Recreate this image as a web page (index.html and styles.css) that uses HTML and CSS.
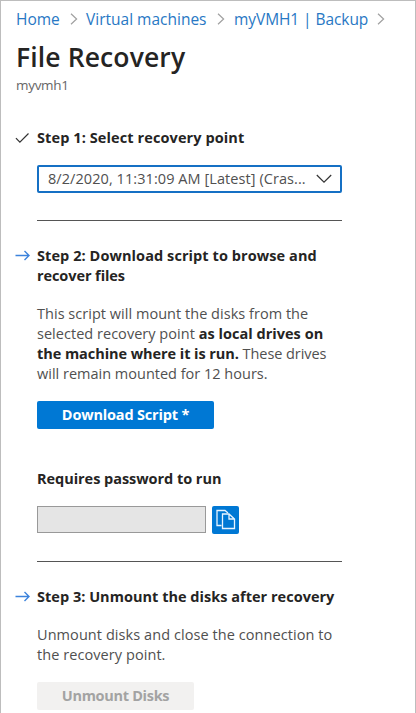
FILE: index.html
```html
<!DOCTYPE html>
<html lang="en">
<head>
<meta charset="utf-8">
<title>File Recovery</title>
<link rel="stylesheet" href="styles.css">
</head>
<body>
<main class="blade">
  <nav class="crumbs">
    <a class="crumb-home">Home</a>
    <svg class="sep" viewBox="0 0 8 12"><path d="M1 .8 6.6 6 1 11.2"/></svg>
    <a class="crumb-vms">Virtual machines</a>
    <svg class="sep" viewBox="0 0 8 12"><path d="M1 .8 6.6 6 1 11.2"/></svg>
    <a class="crumb-backup">myVMH1 | Backup</a>
    <svg class="sep" viewBox="0 0 8 12"><path d="M1 .8 6.6 6 1 11.2"/></svg>
  </nav>
  <h1><span>File Recovery</span></h1>
  <p class="subtitle"><span>myvmh1</span></p>

  <section class="step step-one">
    <svg class="mark check" viewBox="0 0 16 12"><path d="M1 6.2 5.2 10.4 14.4 1.2"/></svg>
    <div class="content">
      <h2><span class="s1">Step 1: Select recovery point</span></h2>
      <div class="select"><span class="value">8/2/2020, 11:31:09 AM [Latest] (Cras...</span>
        <svg class="chevron" viewBox="0 0 16 10"><path d="M.8 1 8 8.2 15.2 1"/></svg>
      </div>
    </div>
  </section>

  <section class="step step-two">
    <svg class="mark arrow" viewBox="0 0 15 12"><path d="M.5 5.500H14M9.500 1 14 5.500 9.500 10"/></svg>
    <div class="content">
      <h2><span class="s2a">Step 2: Download script to browse and</span><br><span class="s2b">recover files</span></h2>
      <p class="text"><span class="t1">This script will mount the disks from the</span><br><span class="t2">selected recovery point <b>as local drives on</b></span><br><span class="t3"><b>the machine where it is run.</b> These drives</span><br><span class="t4">will remain mounted for 12 hours.</span></p>
      <button class="primary"><span>Download Script *</span></button>
      <h3><span>Requires password to run</span></h3>
      <div class="password">
        <div class="field"></div>
        <button class="copy" aria-label="Copy"><svg viewBox="0 0 27 28"><path d="M9.500 19.500H5V4.500H13L16 7"/><path d="M10.500 8H17L22.500 13V22.500H10.500ZM17 8V13H22.500"/></svg></button>
      </div>
    </div>
  </section>

  <section class="step step-three">
    <svg class="mark arrow" viewBox="0 0 15 12"><path d="M.5 5.500H14M9.500 1 14 5.500 9.500 10"/></svg>
    <div class="content">
      <h2><span class="s3">Step 3: Unmount the disks after recovery</span></h2>
      <p class="text"><span class="u1">Unmount disks and close the connection to</span><br><span class="u2">the recovery point.</span></p>
      <button class="disabled" disabled><span>Unmount Disks</span></button>
    </div>
  </section>
</main>
</body>
</html>
```
FILE: styles.css
```css
* { box-sizing: border-box; }
body { margin: 0; background: #fff; color: #252423; font: 14.500px/20px "Open Sans", "Noto Sans", sans-serif; }
h1, h2, h3, p { margin: 0; }
button { font: inherit; padding: 0; border: 0; display: block; }
svg { display: block; fill: none; flex: none; }
.blade { height: 713px; overflow: hidden; border: solid #bdbdbd; border-width: 1px 1px 0 1px; padding: 8px 0 0 14px; }
.crumbs { display: flex; align-items: center; height: 20px; padding-left: 1px; color: #2878c4; font-size: 15.500px; white-space: nowrap; }
.crumb-home { width: 54px; }
.crumb-vms { width: 131px; margin-left: 8px; }
.crumb-backup { width: 143px; margin-left: 9px; letter-spacing: -.07px; }
.sep { width: 8px; height: 12px; stroke: #a0a0a0; stroke-width: 1.200; }
h1 { font-size: 26.500px; line-height: 36px; font-weight: 600; margin: 10px 0 0 1px; letter-spacing: .12px; white-space: nowrap; }
.subtitle { font-size: 13.500px; line-height: 18px; color: #666; margin: 1px 0 0 1px; letter-spacing: -.3px; }
.step { display: flex; width: 328px; }
.step-one { margin-top: 34px; }
.step-two, .step-three { margin-top: 25px; }
.mark { width: 15px; height: 12px; margin: 4px 7px 0 0; }
.check { stroke: #333; stroke-width: 1.300; }
.arrow { stroke: #3c83dc; stroke-width: 1.400; }
.content { width: 305px; white-space: nowrap; }
h2, h3 { font-size: 14.500px; line-height: 20px; font-weight: 700; }
.s1 { letter-spacing: .1px; }
.s2a { letter-spacing: .08px; }
.s2b { letter-spacing: -.08px; }
.s3 { letter-spacing: .02px; }
.t1, .t2 { letter-spacing: .03px; }
.t3 { letter-spacing: -.06px; }
.u1, .u2 { letter-spacing: .07px; }
.step-one .content, .step-two .content { border-bottom: 1px solid #555; }
.select { display: flex; align-items: center; justify-content: space-between; height: 28px; border: 2px solid #1570c4; border-radius: 2px; margin: 17px 0 27px; padding: 0 8px 0 9px; color: #505050; }
.value { letter-spacing: .07px; }
.chevron { width: 16px; height: 10px; stroke: #333; stroke-width: 1.200; }
.text { margin-top: 18px; color: #505050; }
.text b { color: #252423; }
.primary { width: 177px; height: 28px; margin-top: 17px; border-radius: 2px; background: #0078d4; color: #fff; font-weight: 700; letter-spacing: -.18px; }
h3 { margin-top: 40px; letter-spacing: -.04px; }
.password { display: flex; gap: 6px; margin: 17px 0 27px; }
.field { width: 169px; height: 27px; border: 1px solid #999; background: #e5e5e5; }
.copy { width: 27px; height: 28px; border-radius: 2px; background: #0078d4; }
.copy svg { width: 27px; height: 28px; stroke: #e8f4ff; stroke-width: 1.300; }
.disabled { width: 157px; height: 28px; margin-top: 17px; border-radius: 2px; background: #f2f1f0; color: #a3a3a3; font-weight: 700; letter-spacing: -.3px; }
```
